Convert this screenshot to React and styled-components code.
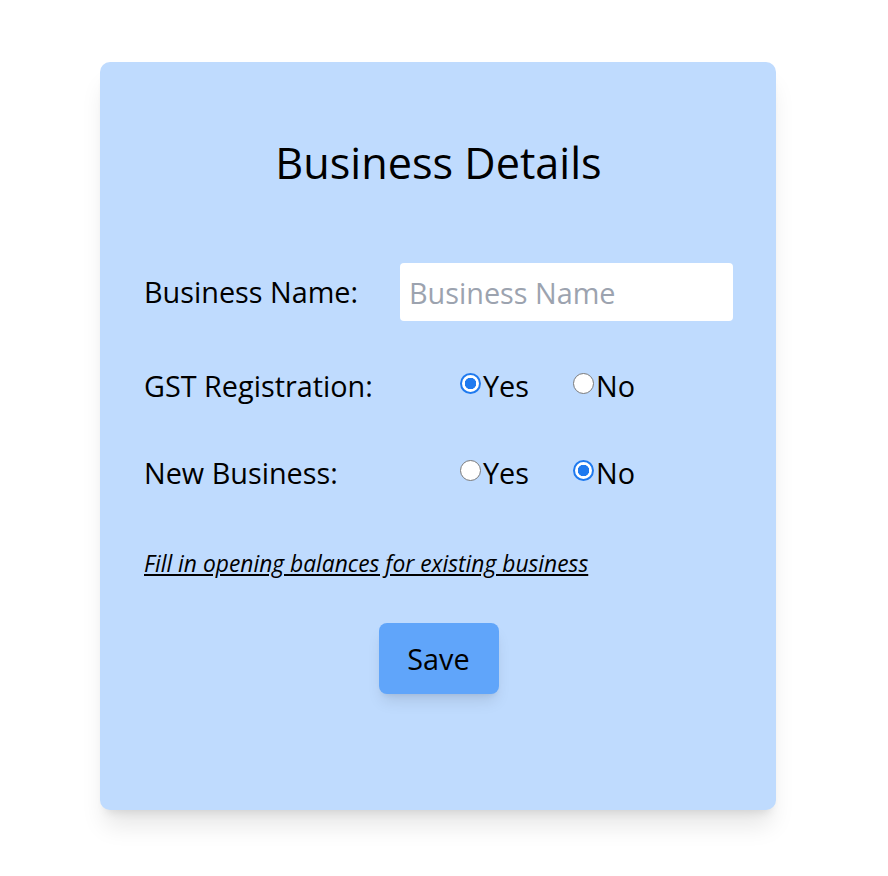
import React from "react";
import styled, { createGlobalStyle } from "styled-components";

const GlobalStyle = createGlobalStyle`
  body {
    margin: 0;
    background: #ffffff;
    font-family: "Open Sans", "Noto Sans", sans-serif;
    color: #000;
  }
`;

const Page = styled.div`
  width: 888px;
  min-height: 876px;
  padding-top: 62px;
  box-sizing: border-box;
`;

const Card = styled.div`
  margin-left: 100px;
  width: 676px;
  min-height: 748px;
  box-sizing: border-box;
  padding: 0 43px 0 44px;
  background: #bfdbfe;
  border-radius: 10px;
  box-shadow: 0 20px 25px -5px rgba(0, 0, 0, 0.1), 0 8px 10px -6px rgba(0, 0, 0, 0.1);
  display: flex;
  flex-direction: column;
`;

const Title = styled.h1`
  margin: 72px 0 0;
  font-size: 43.2px;
  font-weight: 400;
  line-height: 57px;
  text-align: center;
`;

const Row = styled.div`
  display: grid;
  grid-template-columns: 256px 1fr;
  align-items: center;
  height: 58px;
  margin-top: ${p => p.top}px;
`;

const Label = styled.label`
  font-size: 28.8px;
  line-height: 1;
`;

const TextInput = styled.input`
  width: 100%;
  min-width: 0;
  height: 58px;
  box-sizing: border-box;
  border: 0;
  border-radius: 4px;
  background: #fff;
  padding: 0 9px;
  font-family: inherit;
  font-size: 28.8px;
  outline: none;
  &::placeholder {
    color: #9ca3af;
  }
`;

const RadioGroup = styled.div`
  display: flex;
  padding-left: 60px;
  gap: 44px;
`;

const RadioOption = styled.label`
  display: flex;
  align-items: center;
  font-size: 28.8px;
  line-height: 1;
  gap: 2px;
`;

const Radio = styled.input`
  appearance: none;
  box-sizing: border-box;
  width: 21px;
  height: 21px;
  margin: 0 0 5px 0;
  border-radius: 50%;
  border: 1.5px solid #7a7a7a;
  background: #fff;

  &:checked {
    border: 2px solid #1f7aef;
    background: radial-gradient(circle, #1f7aef 0 5.5px, #fff 6px);
  }
`;

const Link = styled.a`
  margin-top: 47px;
  align-self: flex-start;
  font-size: 22.8px;
  font-style: italic;
  line-height: 30px;
  color: #000;
  text-decoration: underline;
  cursor: pointer;
`;

const SaveButton = styled.button`
  margin-top: 44px;
  align-self: center;
  width: 120px;
  height: 71px;
  border: 0;
  border-radius: 8px;
  background: #60a5fa;
  color: #000;
  font-family: inherit;
  font-size: 28.8px;
  box-shadow: 0 10px 15px -3px rgba(0, 0, 0, 0.1), 0 4px 6px -4px rgba(0, 0, 0, 0.1);
  cursor: pointer;
`;

const YesNo = ({ name, value }) => (
  <RadioGroup>
    <RadioOption>
      <Radio type="radio" name={name} defaultChecked={value === "yes"} />
      Yes
    </RadioOption>
    <RadioOption>
      <Radio type="radio" name={name} defaultChecked={value === "no"} />
      No
    </RadioOption>
  </RadioGroup>
);

export default function App() {
  return (
    <Page>
      <GlobalStyle />
      <Card>
        <Title>Business Details</Title>
        <Row top={72}>
          <Label>Business Name:</Label>
          <TextInput placeholder="Business Name" />
        </Row>
        <Row top={36}>
          <Label>GST Registration:</Label>
          <YesNo name="gst" value="yes" />
        </Row>
        <Row top={29}>
          <Label>New Business:</Label>
          <YesNo name="new" value="no" />
        </Row>
        <Link>Fill in opening balances for existing business</Link>
        <SaveButton>Save</SaveButton>
      </Card>
    </Page>
  );
}
